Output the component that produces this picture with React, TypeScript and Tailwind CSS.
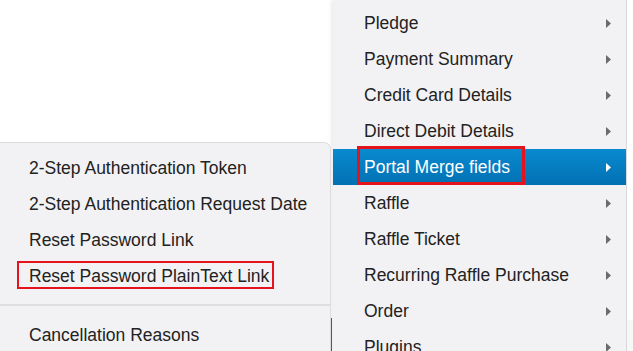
import React from 'react';

const mainItems = [
  'Pledge',
  'Payment Summary',
  'Credit Card Details',
  'Direct Debit Details',
  'Portal Merge fields',
  'Raffle',
  'Raffle Ticket',
  'Recurring Raffle Purchase',
  'Order',
  'Plugins',
];

const subItems = [
  '2-Step Authentication Token',
  '2-Step Authentication Request Date',
  'Reset Password Link',
  'Reset Password PlainText Link',
];

const Arrow: React.FC<{ active?: boolean }> = ({ active }) => (
  <svg width="5" height="9" viewBox="0 0 5 9" className="shrink-0">
    <path d="M0 0 L5 4.5 L0 9 Z" fill={active ? '#ffffff' : '#6b6b6b'} />
  </svg>
);

const App: React.FC = () => {
  return (
    <div
      className="relative w-[633px] h-[351px] bg-white overflow-hidden text-[17.5px] text-[#222]"
      style={{ fontFamily: '"Liberation Sans", Arial, sans-serif' }}
    >
      {/* strip behind the menus on the right */}
      <div className="absolute right-0 top-[320px] w-[6px] h-[31px] bg-[#f7f7f7]" />
      {/* dark edge peeking between the two menus */}
      <div className="absolute left-[331px] top-[318px] w-px h-[33px] bg-[#5a5a7a]" />

      {/* Main context menu */}
      <div className="absolute left-[333px] top-0 w-[294px] h-[360px] flex flex-col bg-[#f2f2f4] border-r border-[#d9d9dc] shadow-[-2px_0_3px_rgba(0,0,0,0.08)] pt-[5px]">
        {mainItems.map((item) => {
          const active = item === 'Portal Merge fields';
          return (
            <div
              key={item}
              className={`relative flex shrink-0 items-center justify-between h-9 pl-[31px] pr-[15px] ${
                active ? 'bg-gradient-to-b from-[#0a8ad0] to-[#0271b3] text-white' : ''
              }`}
            >
              <span>{item}</span>
              <Arrow active={active} />
              {active && (
                <div className="absolute left-[24px] top-[-3px] w-[168px] h-[39px] border-[3px] border-[#e5141c]" />
              )}
            </div>
          );
        })}
      </div>

      {/* Submenu */}
      <div className="absolute left-0 top-[142px] w-[331px] h-[220px] flex flex-col bg-[#f2f2f4] border border-l-0 border-[#dcdcdf] rounded-tr-[7px] pt-[7px]">
        {subItems.map((item) => (
          <div key={item} className="relative flex items-center h-9 pl-[29px]">
            <span>{item}</span>
            {item === 'Reset Password PlainText Link' && (
              <div className="absolute left-[17px] top-[3px] w-[257px] h-[28px] border-2 border-[#e5141c]" />
            )}
          </div>
        ))}
        <div className="mt-[10px] mb-[11px] h-[2px] bg-[#dedee1]" />
        <div className="flex items-center h-9 pl-[29px]">Cancellation Reasons</div>
      </div>
    </div>
  );
};

export default App;
